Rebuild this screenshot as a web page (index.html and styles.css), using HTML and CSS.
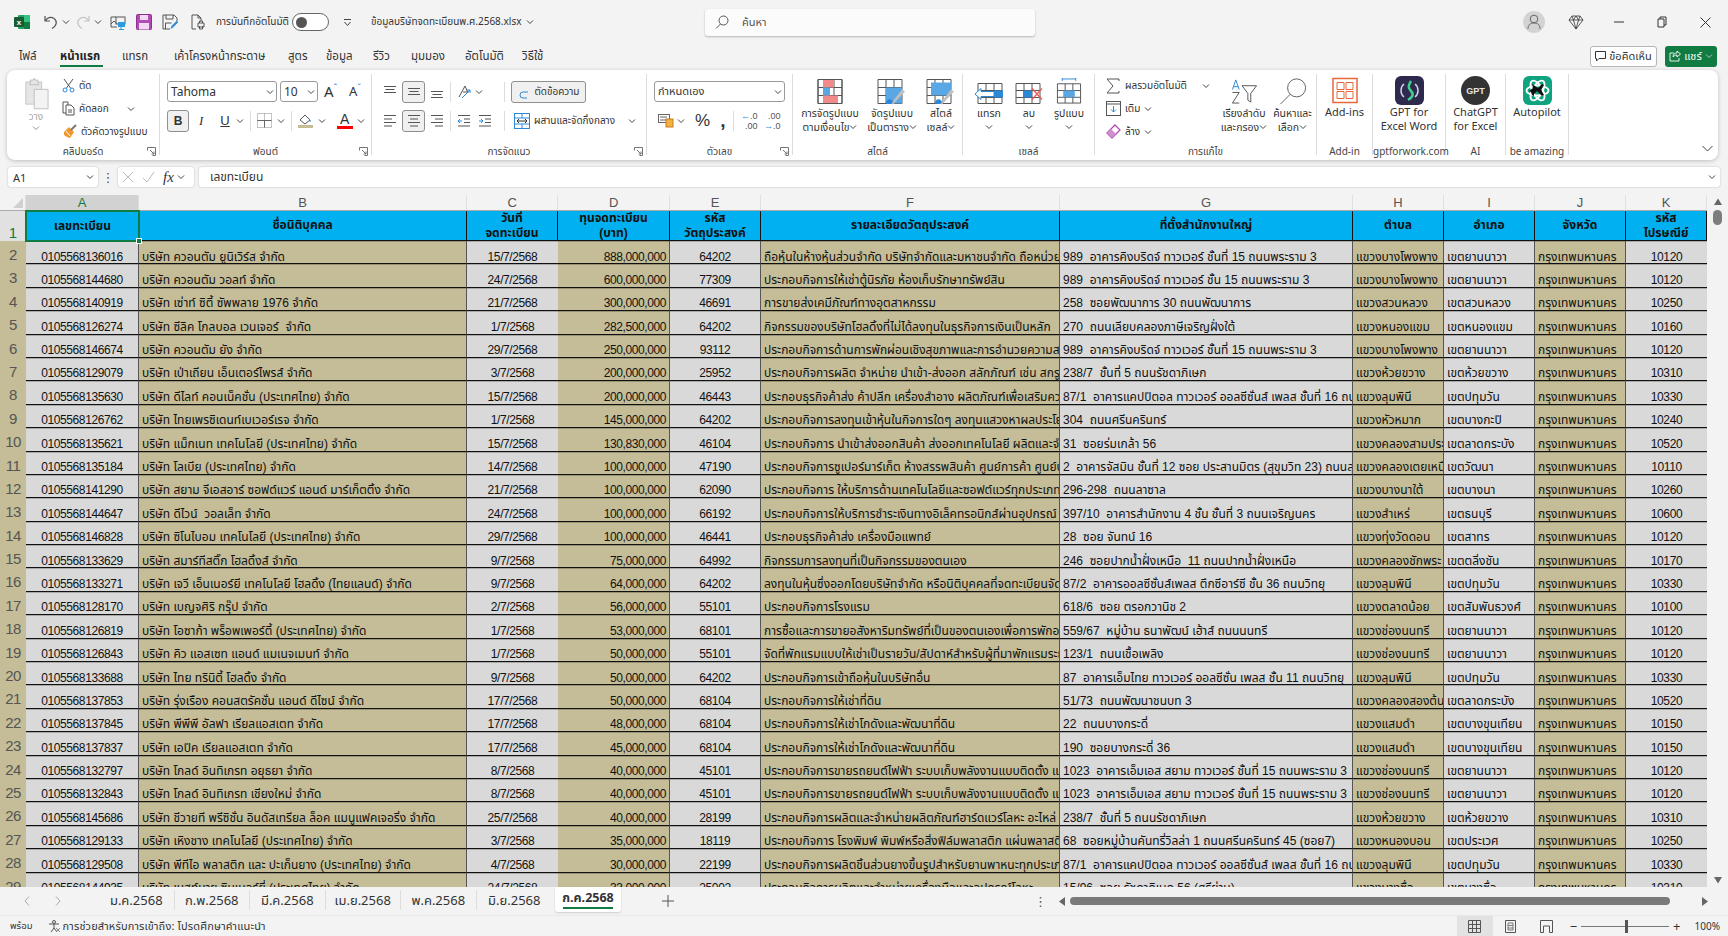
FILE: index.html
```html
<!DOCTYPE html>
<html lang="th">
<head>
    <meta charset="UTF-8">
    <title>ข้อมูลบริษัทจดทะเบียนพ.ศ.2568.xlsx - Excel</title>
    <link rel="stylesheet" href="styles.css">
</head>
<body>
    <svg class="defs" width="0" height="0">
        <symbol id="chev" viewBox="0 0 8 8"><path d="M1 2.5 4 5.5 7 2.5" fill="none" stroke="#444" stroke-width="1"/></symbol>
        <symbol id="launch" viewBox="0 0 9 9"><path d="M.5 3.5V.5H8.5V8.5H5.5M3 3 7 7M7 4.5V7H4.5" fill="none" stroke="#666" stroke-width=".9"/></symbol>
    </svg>

    <!-- title bar -->
    <header class="titlebar">
        <svg class="qat-logo" width="16" height="16" viewBox="0 0 16 16"><rect x="4" y="1" width="12" height="14" rx="1" fill="#21a366"/><rect x="10" y="1" width="6" height="7" fill="#33c481"/><rect x="10" y="8" width="6" height="7" fill="#107c41"/><rect y="3" width="10" height="10" rx="1" fill="#185c37"/><text x="5" y="11" class="logo-x">x</text></svg>
        <svg class="undo" width="14" height="16" viewBox="0 0 14 16"><path d="M1 2v5h5M1.5 7C3 3.5 7 2.5 10 4.5 13.5 7 13 11.5 8 14.5" fill="none" stroke="#555" stroke-width="1.2"/></svg>
        <svg class="chev chev-undo"><use href="#chev"/></svg>
        <svg class="redo" width="14" height="16" viewBox="0 0 14 16"><path d="M13 2v5H8M12.5 7C11 3.5 7 2.5 4 4.5 .5 7 1 11.5 6 14.5" fill="none" stroke="#c4c4c4" stroke-width="1.2"/></svg>
        <svg class="chev chev-redo"><use href="#chev"/></svg>
        <svg class="qat-screen" width="16" height="16" viewBox="0 0 16 16"><path d="M6 3H1v10h6M1 10l3-3 3 3" fill="none" stroke="#555"/><rect x="6" y="3" width="9" height="7" fill="none" stroke="#555"/><rect x="8" y="8" width="7" height="5" fill="#2b9be0"/><path d="M11 13v2M9 15.5h5" stroke="#2b9be0"/></svg>
        <svg class="qat-save" width="16" height="16" viewBox="0 0 16 16"><rect x=".5" y=".5" width="15" height="15" rx="1" fill="#b34bb5" stroke="#8f2f92"/><rect x="4" y="1" width="8" height="5" fill="#f2d9f3"/><rect x="3" y="9" width="10" height="6.5" fill="#f2d9f3"/></svg>
        <svg class="qat-saveas" width="16" height="16" viewBox="0 0 16 16"><path d="M1 1h11l3 3v4M1 1v14h7M4 1v4h7V1M3.5 15V9h6" fill="none" stroke="#555"/><path d="M8.5 15l1-3 5-5 1.5 1.5-5 5z" fill="#2b88d8"/></svg>
        <svg class="qat-print" width="14" height="16" viewBox="0 0 14 16"><path d="M1 1h6l3 3v3M1 1v14h4M7 1v3h3" fill="none" stroke="#555"/><path d="M7 9h6v4H7zM8.5 9V7h3v2M8.5 12v3h3v-3" fill="none" stroke="#555"/></svg>
        <span class="autosave-label">การบันทึกอัตโนมัติ</span>
        <span class="toggle"><i></i></span>
        <svg class="qat-more" width="9" height="9" viewBox="0 0 9 9"><path d="M1 1.5h7M1.5 4 4.5 7.5 7.5 4" fill="none" stroke="#444"/></svg>
        <span class="filename">ข้อมูลบริษัทจดทะเบียนพ.ศ.2568.xlsx</span>
        <svg class="chev chev-file"><use href="#chev"/></svg>
        <div class="search">
            <svg width="14" height="14" viewBox="0 0 14 14"><circle cx="8.5" cy="5.5" r="4.5" fill="none" stroke="#555"/><path d="M5.5 9 1 13.5" stroke="#555"/></svg>
            <span>ค้นหา</span>
        </div>
        <div class="window-tools">
            <span class="avatar"><svg width="14" height="16" viewBox="0 0 14 16"><circle cx="7" cy="5" r="3.8" fill="none" stroke="#666"/><path d="M1 15c0-4 2-6 6-6s6 2 6 6" fill="none" stroke="#666"/></svg></span>
            <svg class="diamond" width="16" height="15" viewBox="0 0 16 15"><path d="M4 1h8l3 4-7 9-7-9zM1 5h14M5.5 5 8 14l2.5-9M4 1l1.5 4L8 1l2.5 4L12 1" fill="none" stroke="#333" stroke-width=".8"/></svg>
            <svg class="win-min" width="10" height="10" viewBox="0 0 10 10"><path d="M0 5h10" stroke="#333"/></svg>
            <svg class="win-max" width="10" height="12" viewBox="0 0 10 12"><path d="M1 3h6v8H1zM3 3V1h6v8H7" fill="none" stroke="#333"/></svg>
            <svg class="win-close" width="11" height="11" viewBox="0 0 11 11"><path d="M.5.5l10 10M10.5.5l-10 10" stroke="#333"/></svg>
        </div>
    </header>

    <!-- menu tabs -->
    <nav class="tabs">
        <span class="tab-file">ไฟล์</span>
        <span class="tab-home">หน้าแรก</span>
        <span class="tab-insert">แทรก</span>
        <span class="tab-layout">เค้าโครงหน้ากระดาษ</span>
        <span class="tab-formula">สูตร</span>
        <span class="tab-data">ข้อมูล</span>
        <span class="tab-review">รีวิว</span>
        <span class="tab-view">มุมมอง</span>
        <span class="tab-auto">อัตโนมัติ</span>
        <span class="tab-help">วิธีใช้</span>
        <span class="tabs-right">
            <button class="btn-comment"><svg width="11" height="11" viewBox="0 0 11 11"><path d="M.5.5h10v7H4L1.5 10V7.5h-1z" fill="none" stroke="#333"/></svg>ข้อคิดเห็น</button>
            <button class="btn-share"><svg width="12" height="12" viewBox="0 0 12 12"><path d="M5 3H1v8h9V8M4 7c0-3 2-4 4-4V1l3.5 3L8 7V5C6 5 5 6 4 7z" fill="none" stroke="#fff" stroke-width=".9"/></svg>แชร์<svg class="chev"><use href="#chev"/></svg></button>
        </span>
    </nav>

    <!-- ribbon -->
    <section class="ribbon">
        <div class="group g-clip">
            <div class="group-body">
                <div class="paste">
                    <svg width="25" height="33" viewBox="0 0 27 35"><path d="M2 5h17v24H2z" fill="#e6e6e6" stroke="#c4c4c4"/><path d="M7 5V3h3l1-2 1 2h3v2l1 3H6z" fill="#e6e6e6" stroke="#bdbdbd"/><path d="M11 13h15v21H11z" fill="#f3f3f3" stroke="#bdbdbd"/></svg>
                    <span>วาง</span>
                    <svg class="chev"><use href="#chev"/></svg>
                </div>
                <div class="stack">
                    <div class="item"><svg width="13" height="15" viewBox="0 0 13 15"><path d="M2 1l6.5 9M11 1 4.5 10" stroke="#555" fill="none"/><circle cx="3" cy="12" r="2" fill="none" stroke="#2b88d8"/><circle cx="10" cy="12" r="2" fill="none" stroke="#2b88d8"/></svg>ตัด</div>
                    <div class="item"><svg width="13" height="15" viewBox="0 0 13 15"><path d="M1 1h5v11H1z" fill="none" stroke="#555"/><path d="M4 4h5l3 3v7H4z" fill="#fff" stroke="#555"/><path d="M6 9h4M6 11h4" stroke="#555"/></svg>คัดลอก<svg class="chev chev-copy"><use href="#chev"/></svg></div>
                    <div class="item"><svg width="15" height="15" viewBox="0 0 15 15"><path d="M2 8l5-5 5 5-4 6-3-1-3-2z" fill="#f0962e"/><path d="M9 6l5-5" stroke="#777" stroke-width="2"/><path d="M4 7l4 5" stroke="#fff"/></svg>ตัวคัดวางรูปแบบ</div>
                </div>
            </div>
            <div class="group-label">คลิปบอร์ด<svg class="launcher"><use href="#launch"/></svg></div>
        </div>

        <div class="group g-font">
            <div class="group-body rows">
                <div class="row-ctl">
                    <div class="select sel-font">Tahoma<svg class="chev"><use href="#chev"/></svg></div>
                    <div class="select sel-size">10<svg class="chev"><use href="#chev"/></svg></div>
                    <span class="grow-a">A<sup>ˆ</sup></span>
                    <span class="shrink-a">A<sup>ˇ</sup></span>
                </div>
                <div class="row-ctl">
                    <span class="toggle-btn b-bold">B</span>
                    <span class="b-italic">I</span>
                    <span class="b-under">U</span>
                    <svg class="chev"><use href="#chev"/></svg>
                    <i class="vsep sep-u"></i>
                    <svg class="b-border" width="15" height="15" viewBox="0 0 15 15"><path d="M.5.5h14v14H.5zM7.5.5v14M.5 7.5h14" fill="none" stroke="#888" stroke-dasharray="1 1"/><path d="M.5 7.5h14M7.5 7.5v7" stroke="#666"/></svg>
                    <svg class="chev"><use href="#chev"/></svg>
                    <i class="vsep sep-b"></i>
                    <svg class="b-fill" width="15" height="16" viewBox="0 0 15 16"><path d="M2 7l5-5 5 5-5 4z" fill="none" stroke="#555"/><path d="M10 4l3 4-1 1z" fill="#2b88d8"/><rect y="12" width="15" height="3" fill="#c4bd97"/></svg>
                    <svg class="chev"><use href="#chev"/></svg>
                    <span class="b-color">A<i></i></span>
                    <svg class="chev"><use href="#chev"/></svg>
                </div>
            </div>
            <div class="group-label">ฟอนต์<svg class="launcher"><use href="#launch"/></svg></div>
        </div>

        <div class="group g-align">
            <div class="group-body rows">
                <div class="row-ctl">
                    <svg class="al al-1" width="14" height="14" viewBox="0 0 14 14"><path d="M1 1.5h12M2.5 4.5h9M1 7.5h12" stroke="#555"/></svg>
                    <span class="toggle-btn al-on"><svg width="14" height="14" viewBox="0 0 14 14"><path d="M1 3.5h12M2.5 6.5h9M1 9.5h12" stroke="#555"/></svg></span>
                    <svg class="al al-3" width="14" height="14" viewBox="0 0 14 14"><path d="M1 6.5h12M2.5 9.5h9M1 12.5h12" stroke="#555"/></svg>
                    <i class="vsep sep-al"></i>
                    <svg class="al-orient" width="15" height="15" viewBox="0 0 15 15"><path d="M2 13 8 2l3 7" fill="none" stroke="#555"/><path d="M6 8h4" stroke="#555"/><path d="M5 14 13 6M13 6h-3M13 6v3" stroke="#2b88d8" fill="none"/></svg>
                    <svg class="chev"><use href="#chev"/></svg>
                    <i class="vsep sep-wrap"></i>
                    <div class="toggle-btn wrap-btn"><svg width="14" height="16" viewBox="0 0 14 16"><path d="M9 14H5a3 3 0 0 1 0-6h5" fill="none" stroke="#2b88d8"/></svg>ตัดข้อความ</div>
                </div>
                <div class="row-ctl">
                    <svg class="al al-1" width="14" height="14" viewBox="0 0 14 14"><path d="M1 1.5h12M1 5h8M1 8.5h12M1 12h8" stroke="#555"/></svg>
                    <span class="toggle-btn al-on"><svg width="14" height="14" viewBox="0 0 14 14"><path d="M1 1.5h12M3 5h8M1 8.5h12M3 12h8" stroke="#555"/></svg></span>
                    <svg class="al al-3" width="14" height="14" viewBox="0 0 14 14"><path d="M1 1.5h12M5 5h8M1 8.5h12M5 12h8" stroke="#555"/></svg>
                    <i class="vsep sep-al"></i>
                    <svg class="al-indent" width="14" height="14" viewBox="0 0 14 14"><path d="M1 1.5h12M7 5h6M7 8.5h6M1 12h12" stroke="#555"/><path d="M1 7h4M1 7l2-2M1 7l2 2" stroke="#2b88d8" fill="none"/></svg>
                    <svg class="al-indent2" width="14" height="14" viewBox="0 0 14 14"><path d="M1 1.5h12M7 5h6M7 8.5h6M1 12h12" stroke="#555"/><path d="M1 7h4M5 7 3 5M5 7 3 9" stroke="#2b88d8" fill="none"/></svg>
                    <i class="vsep sep-wrap2"></i>
                    <svg class="al-merge" width="16" height="16" viewBox="0 0 16 16"><rect x=".5" y=".5" width="15" height="15" fill="none" stroke="#2b88d8"/><path d="M.5 5h15M.5 11h15M8 .5V5M8 11v4.5" stroke="#2b88d8"/><path d="M3 8h10M3 8l2-2M3 8l2 2M13 8l-2-2M13 8l-2 2" stroke="#333" fill="none"/></svg>
                    <span class="merge-text">ผสานและจัดกึ่งกลาง</span>
                    <svg class="chev chev-merge"><use href="#chev"/></svg>
                </div>
            </div>
            <div class="group-label">การจัดแนว<svg class="launcher"><use href="#launch"/></svg></div>
        </div>

        <div class="group g-num">
            <div class="group-body rows">
                <div class="row-ctl">
                    <div class="select sel-num">กำหนดเอง<svg class="chev"><use href="#chev"/></svg></div>
                </div>
                <div class="row-ctl">
                    <svg class="n-acc" width="16" height="15" viewBox="0 0 16 15"><rect x=".5" y="1.5" width="11" height="8" fill="none" stroke="#666"/><path d="M2 4h7M2 7h7" stroke="#666"/><rect x="8" y="6" width="7" height="8" fill="#f5b041" stroke="#c77f1e"/></svg>
                    <svg class="chev"><use href="#chev"/></svg>
                    <span class="n-pct">%</span>
                    <span class="n-comma">,</span>
                    <i class="vsep sep-n"></i>
                    <span class="n-dec"><b><em>←</em>.0</b><b>.00</b></span>
                    <span class="n-dec n-dec2"><b>.00</b><b><em>→</em>.0</b></span>
                </div>
            </div>
            <div class="group-label">ตัวเลข<svg class="launcher"><use href="#launch"/></svg></div>
        </div>

        <div class="group g-style">
            <div class="group-body big-row">
                <div class="big b-cond">
                    <svg width="26" height="26" viewBox="0 0 26 26"><path d="M1 1h24v24H1zM9 1v24M17 1v24M1 9h24M1 17h24" fill="none" stroke="#555"/><rect x="6" y="1" width="11" height="8" fill="#f28a8a"/><rect x="6" y="9" width="7" height="8" fill="#5aa7e6"/><rect x="6" y="17" width="15" height="8" fill="#f28a8a"/><path d="M1 1h24v24H1z" fill="none" stroke="#555"/></svg>
                    <span>การจัดรูปแบบ</span>
                    <span>ตามเงื่อนไข<svg class="chev"><use href="#chev"/></svg></span>
                </div>
                <div class="big b-table">
                    <svg width="30" height="26" viewBox="0 0 30 26"><path d="M1 1h24v24H1zM9 1v24M17 1v24M1 9h24M1 17h24" fill="none" stroke="#555"/><rect x="9" y="9" width="16" height="16" fill="#5aa7e6"/><path d="M14 25 25 11l3 2-12 13z" fill="#bfbfbf"/><path d="M9 25c0-3 2-5 5-4l2 2c-1 3-3 3-7 2z" fill="#2b88d8"/></svg>
                    <span>จัดรูปแบบ</span>
                    <span>เป็นตาราง<svg class="chev"><use href="#chev"/></svg></span>
                </div>
                <div class="big b-cell">
                    <svg width="30" height="26" viewBox="0 0 30 26"><path d="M1 1h24v24H1zM9 1v24M17 1v24M1 9h24M1 17h24" fill="none" stroke="#555"/><rect x="5" y="4" width="20" height="13" fill="#5aa7e6"/><path d="M14 25 25 11l3 2-12 13z" fill="#bfbfbf"/><path d="M9 25c0-3 2-5 5-4l2 2c-1 3-3 3-7 2z" fill="#2b88d8"/></svg>
                    <span>สไตล์</span>
                    <span>เซลล์<svg class="chev"><use href="#chev"/></svg></span>
                </div>
            </div>
            <div class="group-label">สไตล์</div>
        </div>

        <div class="group g-cells">
            <div class="group-body big-row">
                <div class="big b-ins">
                    <svg width="30" height="26" viewBox="0 0 30 26"><path d="M4 5h24v20H4zM12 5v20M20 5v20M4 12h24M4 19h24" fill="none" stroke="#555"/><rect x="20" y="12" width="9" height="7" fill="#2b88d8"/><path d="M1 15.5 7 10v3h13v5H7v3z" fill="#fff" stroke="#2b88d8"/></svg>
                    <span>แทรก</span>
                    <svg class="chev"><use href="#chev"/></svg>
                </div>
                <div class="big b-del">
                    <svg width="30" height="26" viewBox="0 0 30 26"><path d="M2 5h24v20H2zM10 5v20M18 5v20M2 12h24M2 19h24" fill="none" stroke="#555"/><rect x="9" y="12" width="9" height="7" fill="#2b88d8"/><path d="M18 10 28 21M28 10 18 21" stroke="#ee5a5a" stroke-width="1.4"/></svg>
                    <span>ลบ</span>
                    <svg class="chev"><use href="#chev"/></svg>
                </div>
                <div class="big b-fmt">
                    <svg width="26" height="28" viewBox="0 0 26 28"><path d="M6 1h14M6 0v3M20 0v3" stroke="#2b88d8"/><path d="M1 6h24v20H1zM9 6v20M17 6v20M1 13h24M1 20h24" fill="none" stroke="#555"/><rect x="7" y="13" width="12" height="7" fill="#5aa7e6"/></svg>
                    <span>รูปแบบ</span>
                    <svg class="chev"><use href="#chev"/></svg>
                </div>
            </div>
            <div class="group-label">เซลล์</div>
        </div>

        <div class="group g-edit">
            <div class="group-body">
                <div class="stack stack-edit">
                    <div class="item"><svg width="15" height="16" viewBox="0 0 15 16"><path d="M13 3V1H1l6 7-6 7h12v-2" fill="none" stroke="#555"/></svg>ผลรวมอัตโนมัติ<svg class="chev chev-sum"><use href="#chev"/></svg></div>
                    <div class="item"><svg width="15" height="15" viewBox="0 0 15 15"><rect x=".5" y=".5" width="14" height="14" fill="none" stroke="#555"/><path d="M.5 3h14" stroke="#555"/><path d="M7.5 5v6M5 8.5 7.5 11 10 8.5" stroke="#2b88d8" fill="none"/></svg>เติม<svg class="chev"><use href="#chev"/></svg></div>
                    <div class="item"><svg width="15" height="15" viewBox="0 0 15 15"><path d="M1 9 9 1l5 5-8 8z" fill="none" stroke="#b34bb5" stroke-width="1.3"/><path d="M1 9l4-4 5 5-4 4z" fill="#cf8fd1"/></svg>ล้าง<svg class="chev"><use href="#chev"/></svg></div>
                </div>
                <div class="big b-sort">
                    <svg width="28" height="28" viewBox="0 0 28 28"><path d="M2 12 5.5 2 9 12M3 9h5" fill="none" stroke="#2b88d8"/><path d="M2 15h7l-7 11h7" fill="none" stroke="#555"/><path d="M12 8h15l-6 8v9l-3-2v-7z" fill="none" stroke="#555"/></svg>
                    <span>เรียงลำดับ</span>
                    <span>และกรอง<svg class="chev"><use href="#chev"/></svg></span>
                </div>
                <div class="big b-find">
                    <svg width="30" height="30" viewBox="0 0 30 30"><circle cx="19" cy="11" r="10" fill="#fff" stroke="#555"/><path d="M12 18 1 29" stroke="#555"/></svg>
                    <span>ค้นหาและ</span>
                    <span>เลือก<svg class="chev"><use href="#chev"/></svg></span>
                </div>
            </div>
            <div class="group-label">การแก้ไข</div>
        </div>

        <div class="group g-addins">
            <div class="group-body big-row">
                <div class="big b-plain">
                    <svg width="26" height="26" viewBox="0 0 26 26"><rect x="1" y="1" width="24" height="24" fill="none" stroke="#e8663a" stroke-width="1.5"/><path d="M5 5h7v7H5zM14 5h7v7h-7zM5 14h7v7H5zM14 14h7v7h-7z" fill="none" stroke="#e8663a"/></svg>
                    <span>Add-ins</span>
                </div>
            </div>
            <div class="group-label">Add-in</div>
        </div>
        <div class="group g-gpt">
            <div class="group-body big-row">
                <div class="big b-plain">
                    <svg width="29" height="29" viewBox="0 0 29 29"><rect width="29" height="29" rx="6" fill="#2d2a4e"/><path d="M9 8C5 11 5 18 9 21M20 8c4 3 4 10 0 13" fill="none" stroke="#cfd3e6" stroke-width="1.5"/><path d="M16 5c-3 5-3 7 0 10s2 6-3 9" fill="none" stroke="#3fce8c" stroke-width="2.5"/></svg>
                    <span>GPT for</span>
                    <span>Excel Word</span>
                </div>
            </div>
            <div class="group-label">gptforwork.com</div>
        </div>
        <div class="group g-ai">
            <div class="group-body big-row">
                <div class="big b-plain">
                    <svg width="29" height="29" viewBox="0 0 29 29"><circle cx="14.5" cy="14.5" r="14.5" fill="#333"/><text x="14.5" y="18" class="logo-gpt">GPT</text></svg>
                    <span>ChatGPT</span>
                    <span>for Excel</span>
                </div>
            </div>
            <div class="group-label">AI</div>
        </div>
        <div class="group g-auto">
            <div class="group-body big-row">
                <div class="big b-plain">
                    <svg width="29" height="29" viewBox="0 0 29 29"><rect width="29" height="29" rx="6" fill="#10a37f"/><g fill="none" stroke="#fff" stroke-width="1.8"><ellipse cx="14.5" cy="14.5" rx="11" ry="5"/><ellipse cx="14.5" cy="14.5" rx="11" ry="5" transform="rotate(60 14.5 14.5)"/><ellipse cx="14.5" cy="14.5" rx="11" ry="5" transform="rotate(120 14.5 14.5)"/></g><path d="M9 8l6 4 4-4 2 1-3 5 3 5-2 1-5-5-3 3v2l-2-1-1-3-2-1 4-3z" fill="#111"/></svg>
                    <span>Autopilot</span>
                </div>
            </div>
            <div class="group-label">be amazing</div>
        </div>
        <svg class="ribbon-collapse" width="11" height="7" viewBox="0 0 11 7"><path d="M.5 1 5.5 6 10.5 1" fill="none" stroke="#444"/></svg>
    </section>

    <!-- formula bar -->
    <div class="formula-bar">
        <div class="name-box">A1<svg class="chev"><use href="#chev"/></svg></div>
        <span class="fx-dots">⋮</span>
        <div class="fx-btns">
            <svg width="12" height="12" viewBox="0 0 12 12"><path d="M1 1l10 10M11 1 1 11" stroke="#bbb"/></svg>
            <svg width="13" height="12" viewBox="0 0 13 12"><path d="M1 7l4 4 7-10" fill="none" stroke="#bbb"/></svg>
            <span class="fx">fx</span>
            <svg class="chev"><use href="#chev"/></svg>
        </div>
        <div class="fx-input">เลขทะเบียน<svg class="chev"><use href="#chev"/></svg></div>
    </div>

    <!-- sheet -->
    <main class="sheet-wrap">
        <div class="sheet">
            <div class="row col-heads">
                <div class="corner"></div><div class="col-on">A</div><div>B</div><div>C</div><div>D</div><div>E</div><div>F</div><div>G</div><div>H</div><div>I</div><div>J</div><div>K</div>
            </div>
            <div class="row head-row">
                <div class="rh rh-on">1</div>
                <div class="selected">เลขทะเบียน<i class="handle"></i></div><div>ชื่อนิติบุคคล</div><div>วันที่<br>จดทะเบียน</div><div>ทุนจดทะเบียน<br>(บาท)</div><div>รหัส<br>วัตถุประสงค์</div><div>รายละเอียดวัตถุประสงค์</div><div>ที่ตั้งสำนักงานใหญ่</div><div>ตำบล</div><div>อำเภอ</div><div>จังหวัด</div><div>รหัส<br>ไปรษณีย์</div>
            </div>
            <div class="row"><div class="rh">2</div><div>0105568136016</div><div>บริษัท ควอนตัม ยูนิเวิร์ส จำกัด</div><div>15/7/2568</div><div>888,000,000</div><div>64202</div><div>ถือหุ้นในห้างหุ้นส่วนจำกัด บริษัทจำกัดและมหาชนจำกัด ถือหน่วยลงทุน</div><div>989  อาคารคิงบริดจ์ ทาวเวอร์ ชั้นที่ 15 ถนนพระราม 3</div><div>แขวงบางโพงพาง</div><div>เขตยานนาวา</div><div>กรุงเทพมหานคร</div><div>10120</div></div>
            <div class="row"><div class="rh">3</div><div>0105568144680</div><div>บริษัท ควอนตัม วอลท์ จำกัด</div><div>24/7/2568</div><div>600,000,000</div><div>77309</div><div>ประกอบกิจการให้เช่าตู้นิรภัย ห้องเก็บรักษาทรัพย์สิน</div><div>989  อาคารคิงบริดจ์ ทาวเวอร์ ชั้น 15 ถนนพระราม 3</div><div>แขวงบางโพงพาง</div><div>เขตยานนาวา</div><div>กรุงเทพมหานคร</div><div>10120</div></div>
            <div class="row"><div class="rh">4</div><div>0105568140919</div><div>บริษัท เซ่าท์ ซิตี้ ซัพพลาย 1976 จำกัด</div><div>21/7/2568</div><div>300,000,000</div><div>46691</div><div>การขายส่งเคมีภัณฑ์ทางอุตสาหกรรม</div><div>258  ซอยพัฒนาการ 30 ถนนพัฒนาการ</div><div>แขวงสวนหลวง</div><div>เขตสวนหลวง</div><div>กรุงเทพมหานคร</div><div>10250</div></div>
            <div class="row"><div class="rh">5</div><div>0105568126274</div><div>บริษัท ซีลิค โกลบอล เวนเจอร์  จำกัด</div><div>1/7/2568</div><div>282,500,000</div><div>64202</div><div>กิจกรรมของบริษัทโฮลดิ้งที่ไม่ได้ลงทุนในธุรกิจการเงินเป็นหลัก</div><div>270  ถนนเลียบคลองภาษีเจริญฝั่งใต้</div><div>แขวงหนองแขม</div><div>เขตหนองแขม</div><div>กรุงเทพมหานคร</div><div>10160</div></div>
            <div class="row"><div class="rh">6</div><div>0105568146674</div><div>บริษัท ควอนตัม ยัง จำกัด</div><div>29/7/2568</div><div>250,000,000</div><div>93112</div><div>ประกอบกิจการด้านการพักผ่อนเชิงสุขภาพและการอำนวยความสะดวก</div><div>989  อาคารคิงบริดจ์ ทาวเวอร์ ชั้นที่ 15 ถนนพระราม 3</div><div>แขวงบางโพงพาง</div><div>เขตยานนาวา</div><div>กรุงเทพมหานคร</div><div>10120</div></div>
            <div class="row"><div class="rh">7</div><div>0105568129079</div><div>บริษัท เป่าเถียน เอ็นเตอร์ไพรส์ จำกัด</div><div>3/7/2568</div><div>200,000,000</div><div>25952</div><div>ประกอบกิจการผลิต จำหน่าย นำเข้า-ส่งออก สลักภัณฑ์ เช่น สกรู</div><div>238/7  ชั้นที่ 5 ถนนรัชดาภิเษก</div><div>แขวงห้วยขวาง</div><div>เขตห้วยขวาง</div><div>กรุงเทพมหานคร</div><div>10310</div></div>
            <div class="row"><div class="rh">8</div><div>0105568135630</div><div>บริษัท ดีไลท์ คอนเน็คชั่น (ประเทศไทย) จำกัด</div><div>15/7/2568</div><div>200,000,000</div><div>46443</div><div>ประกอบธุรกิจค้าส่ง ค้าปลีก เครื่องสำอาง ผลิตภัณฑ์เพื่อเสริมความงาม</div><div>87/1  อาคารแคปปิตอล ทาวเวอร์ ออลซีซั่นส์ เพลส ชั้นที่ 16 ถนนวิทยุ</div><div>แขวงลุมพินี</div><div>เขตปทุมวัน</div><div>กรุงเทพมหานคร</div><div>10330</div></div>
            <div class="row"><div class="rh">9</div><div>0105568126762</div><div>บริษัท ไทยเพรซิเดนท์เบเวอร์เรจ จำกัด</div><div>1/7/2568</div><div>145,000,000</div><div>64202</div><div>ประกอบกิจการลงทุนเข้าหุ้นในกิจการใดๆ ลงทุนแสวงหาผลประโยชน์</div><div>304  ถนนศรีนครินทร์</div><div>แขวงหัวหมาก</div><div>เขตบางกะปิ</div><div>กรุงเทพมหานคร</div><div>10240</div></div>
            <div class="row"><div class="rh">10</div><div>0105568135621</div><div>บริษัท แม็กเนท เทคโนโลยี (ประเทศไทย) จำกัด</div><div>15/7/2568</div><div>130,830,000</div><div>46104</div><div>ประกอบกิจการ นำเข้าส่งออกสินค้า ส่งออกเทคโนโลยี ผลิตและจำหน่าย</div><div>31  ซอยร่มเกล้า 56</div><div>แขวงคลองสามประเวศ</div><div>เขตลาดกระบัง</div><div>กรุงเทพมหานคร</div><div>10520</div></div>
            <div class="row"><div class="rh">11</div><div>0105568135184</div><div>บริษัท โลเบีย (ประเทศไทย) จำกัด</div><div>14/7/2568</div><div>100,000,000</div><div>47190</div><div>ประกอบกิจการซูเปอร์มาร์เก็ต ห้างสรรพสินค้า ศูนย์การค้า ศูนย์บริการ</div><div>2  อาคารจัสมิน ชั้นที่ 12 ซอย ประสานมิตร (สุขุมวิท 23) ถนนสุขุมวิท</div><div>แขวงคลองเตยเหนือ</div><div>เขตวัฒนา</div><div>กรุงเทพมหานคร</div><div>10110</div></div>
            <div class="row"><div class="rh">12</div><div>0105568141290</div><div>บริษัท สยาม จีเอสอาร์ ซอฟต์แวร์ แอนด์ มาร์เก็ตติ้ง จำกัด</div><div>21/7/2568</div><div>100,000,000</div><div>62090</div><div>ประกอบกิจการ ให้บริการด้านเทคโนโลยีและซอฟต์แวร์ทุกประเภท</div><div>296-298  ถนนลาซาล</div><div>แขวงบางนาใต้</div><div>เขตบางนา</div><div>กรุงเทพมหานคร</div><div>10260</div></div>
            <div class="row"><div class="rh">13</div><div>0105568144647</div><div>บริษัท ดีไวน์  วอลเล็ท จำกัด</div><div>24/7/2568</div><div>100,000,000</div><div>66192</div><div>ประกอบกิจการให้บริการชำระเงินทางอิเล็คทรอนิกส์ผ่านอุปกรณ์</div><div>397/10  อาคารสำนักงาน 4 ชั้น ชั้นที่ 3 ถนนเจริญนคร</div><div>แขวงสำเหร่</div><div>เขตธนบุรี</div><div>กรุงเทพมหานคร</div><div>10600</div></div>
            <div class="row"><div class="rh">14</div><div>0105568146828</div><div>บริษัท ซิโนไบอม เทคโนโลยี (ประเทศไทย) จำกัด</div><div>29/7/2568</div><div>100,000,000</div><div>46441</div><div>ประกอบธุรกิจค้าส่ง เครื่องมือแพทย์</div><div>28  ซอย จันทน์ 16</div><div>แขวงทุ่งวัดดอน</div><div>เขตสาทร</div><div>กรุงเทพมหานคร</div><div>10120</div></div>
            <div class="row"><div class="rh">15</div><div>0105568133629</div><div>บริษัท สมาร์ทีสติ๊ก โฮลดิ้งส์ จำกัด</div><div>9/7/2568</div><div>75,000,000</div><div>64992</div><div>กิจกรรมการลงทุนที่เป็นกิจกรรมของตนเอง</div><div>246  ซอยปากน้ำฝั่งเหนือ  11 ถนนปากน้ำฝั่งเหนือ</div><div>แขวงคลองชักพระ</div><div>เขตตลิ่งชัน</div><div>กรุงเทพมหานคร</div><div>10170</div></div>
            <div class="row"><div class="rh">16</div><div>0105568133271</div><div>บริษัท เจวี เอ็นเนอร์ยี เทคโนโลยี โฮลดิ้ง (ไทยแลนด์) จำกัด</div><div>9/7/2568</div><div>64,000,000</div><div>64202</div><div>ลงทุนในหุ้นซึ่งออกโดยบริษัทจำกัด หรือนิติบุคคลที่จดทะเบียนจัดตั้ง</div><div>87/2  อาคารออลซีซั่นส์เพลส ตึกซีอาร์ซี ชั้น 36 ถนนวิทยุ</div><div>แขวงลุมพินี</div><div>เขตปทุมวัน</div><div>กรุงเทพมหานคร</div><div>10330</div></div>
            <div class="row"><div class="rh">17</div><div>0105568128170</div><div>บริษัท เบญจศิริ กรุ๊ป จำกัด</div><div>2/7/2568</div><div>56,000,000</div><div>55101</div><div>ประกอบกิจการโรงแรม</div><div>618/6  ซอย ตรอกวานิช 2</div><div>แขวงตลาดน้อย</div><div>เขตสัมพันธวงศ์</div><div>กรุงเทพมหานคร</div><div>10100</div></div>
            <div class="row"><div class="rh">18</div><div>0105568126819</div><div>บริษัท โอซาก้า พร็อพเพอร์ตี้ (ประเทศไทย) จำกัด</div><div>1/7/2568</div><div>53,000,000</div><div>68101</div><div>การซื้อและการขายอสังหาริมทรัพย์ที่เป็นของตนเองเพื่อการพักอาศัย</div><div>559/67  หมู่บ้าน ธนาพัฒน์ เฮ้าส์ ถนนนนทรี</div><div>แขวงช่องนนทรี</div><div>เขตยานนาวา</div><div>กรุงเทพมหานคร</div><div>10120</div></div>
            <div class="row"><div class="rh">19</div><div>0105568126843</div><div>บริษัท คิว แอสเซท แอนด์ แมเนจเมนท์ จำกัด</div><div>1/7/2568</div><div>50,000,000</div><div>55101</div><div>จัดที่พักแรมแบบให้เช่าเป็นรายวัน/สัปดาห์สำหรับผู้ที่มาพักแรมระยะสั้น</div><div>123/1  ถนนเชื้อเพลิง</div><div>แขวงช่องนนทรี</div><div>เขตยานนาวา</div><div>กรุงเทพมหานคร</div><div>10120</div></div>
            <div class="row"><div class="rh">20</div><div>0105568133688</div><div>บริษัท ไทย ทรินิตี้ โฮลดิ้ง จำกัด</div><div>9/7/2568</div><div>50,000,000</div><div>64202</div><div>ประกอบกิจการเข้าถือหุ้นในบริษัทอื่น</div><div>87  อาคารเอ็มไทย ทาวเวอร์ ออลซีซั่น เพลส ชั้น 11 ถนนวิทยุ</div><div>แขวงลุมพินี</div><div>เขตปทุมวัน</div><div>กรุงเทพมหานคร</div><div>10330</div></div>
            <div class="row"><div class="rh">21</div><div>0105568137853</div><div>บริษัท รุ่งเรือง คอนสตรัคชั่น แอนด์ ดีไซน์ จำกัด</div><div>17/7/2568</div><div>50,000,000</div><div>68104</div><div>ประกอบกิจการให้เช่าที่ดิน</div><div>51/73  ถนนพัฒนาชนบท 3</div><div>แขวงคลองสองต้นนุ่น</div><div>เขตลาดกระบัง</div><div>กรุงเทพมหานคร</div><div>10520</div></div>
            <div class="row"><div class="rh">22</div><div>0105568137845</div><div>บริษัท พีพีพี อัลฟา เรียลแอสเตท จำกัด</div><div>17/7/2568</div><div>48,000,000</div><div>68104</div><div>ประกอบกิจการให้เช่าโกดังและพัฒนาที่ดิน</div><div>22  ถนนบางกระดี่</div><div>แขวงแสมดำ</div><div>เขตบางขุนเทียน</div><div>กรุงเทพมหานคร</div><div>10150</div></div>
            <div class="row"><div class="rh">23</div><div>0105568137837</div><div>บริษัท เอปิค เรียลแอสเตท จำกัด</div><div>17/7/2568</div><div>45,000,000</div><div>68104</div><div>ประกอบกิจการให้เช่าโกดังและพัฒนาที่ดิน</div><div>190  ซอยบางกระดี่ 36</div><div>แขวงแสมดำ</div><div>เขตบางขุนเทียน</div><div>กรุงเทพมหานคร</div><div>10150</div></div>
            <div class="row"><div class="rh">24</div><div>0105568132797</div><div>บริษัท โกลด์ อินทิเกรท อยุธยา จำกัด</div><div>8/7/2568</div><div>40,000,000</div><div>45101</div><div>ประกอบกิจการขายรถยนต์ไฟฟ้า ระบบเก็บพลังงานแบบติดตั้ง และ</div><div>1023  อาคารเอ็มเอส สยาม ทาวเวอร์ ชั้นที่ 15 ถนนพระราม 3</div><div>แขวงช่องนนทรี</div><div>เขตยานนาวา</div><div>กรุงเทพมหานคร</div><div>10120</div></div>
            <div class="row"><div class="rh">25</div><div>0105568132843</div><div>บริษัท โกลด์ อินทิเกรท เชียงใหม่ จำกัด</div><div>8/7/2568</div><div>40,000,000</div><div>45101</div><div>ประกอบกิจการขายรถยนต์ไฟฟ้า ระบบเก็บพลังงานแบบติดตั้ง และ</div><div>1023  อาคารเอ็มเอส สยาม ทาวเวอร์ ชั้นที่ 15 ถนนพระราม 3</div><div>แขวงช่องนนทรี</div><div>เขตยานนาวา</div><div>กรุงเทพมหานคร</div><div>10120</div></div>
            <div class="row"><div class="rh">26</div><div>0105568145686</div><div>บริษัท ชีวายที พรีซิชั่น อินดัสเทรียล ล็อค แมนูแฟคเจอริ่ง จำกัด</div><div>25/7/2568</div><div>40,000,000</div><div>28199</div><div>ประกอบกิจการผลิตและจำหน่ายผลิตภัณฑ์ฮาร์ดแวร์โลหะ อะไหล่</div><div>238/7  ชั้นที่ 5 ถนนรัชดาภิเษก</div><div>แขวงห้วยขวาง</div><div>เขตห้วยขวาง</div><div>กรุงเทพมหานคร</div><div>10310</div></div>
            <div class="row"><div class="rh">27</div><div>0105568129133</div><div>บริษัท เหิงชาง เทคโนโลยี (ประเทศไทย) จำกัด</div><div>3/7/2568</div><div>35,000,000</div><div>18119</div><div>ประกอบกิจการ โรงพิมพ์ พิมพ์หรือสิ่งฟิล์มพลาสติก แผ่นพลาสติก</div><div>68  ซอยหมู่บ้านคันทรี่วิลล่า 1 ถนนศรีนครินทร์ 45 (ซอย7)</div><div>แขวงหนองบอน</div><div>เขตประเวศ</div><div>กรุงเทพมหานคร</div><div>10250</div></div>
            <div class="row"><div class="rh">28</div><div>0105568129508</div><div>บริษัท พีทีไอ พลาสติก และ ปะเก็นยาง (ประเทศไทย) จำกัด</div><div>4/7/2568</div><div>30,000,000</div><div>22199</div><div>ประกอบกิจการผลิตชิ้นส่วนยางขึ้นรูปสำหรับยานพาหนะทุกประเภท</div><div>87/1  อาคารแคปปิตอล ทาวเวอร์ ออลซีซั่นส์ เพลส ชั้นที่ 16 ถนนวิทยุ</div><div>แขวงลุมพินี</div><div>เขตปทุมวัน</div><div>กรุงเทพมหานคร</div><div>10330</div></div>
            <div class="row"><div class="rh">29</div><div>0105568144935</div><div>บริษัท เบสท์บาย ซินเนอร์ยี่ (ประเทศไทย) จำกัด</div><div>24/7/2568</div><div>33,000,000</div><div>25002</div><div>ประกอบกิจการผลิตและจำหน่ายเครื่องมือและอุปกรณ์โลหะ</div><div>15/96  ซอย รัชดาภิเษก 56 (ศรีย่าน)</div><div>แขวงบางซื่อ</div><div>เขตบางซื่อ</div><div>กรุงเทพมหานคร</div><div>10310</div></div>
        </div>
        <div class="vscroll">
            <svg width="8" height="7" viewBox="0 0 8 7"><path d="M4 .5 8 7H0z" fill="#666"/></svg>
            <i class="vthumb"></i>
            <svg class="vdown" width="8" height="7" viewBox="0 0 8 7"><path d="M4 6.5 8 0H0z" fill="#666"/></svg>
        </div>
    </main>

    <!-- sheet tabs -->
    <div class="sheet-tabs">
        <svg class="st-prev" width="6" height="10" viewBox="0 0 6 10"><path d="M5 .5 1 5l4 4.5" fill="none" stroke="#aaa"/></svg>
        <svg class="st-next" width="6" height="10" viewBox="0 0 6 10"><path d="M1 .5 5 5 1 9.5" fill="none" stroke="#aaa"/></svg>
        <div class="st-list">
            <span>ม.ค.2568</span>
            <span>ก.พ.2568</span>
            <span>มี.ค.2568</span>
            <span>เม.ย.2568</span>
            <span>พ.ค.2568</span>
            <span>มิ.ย.2568</span>
            <span class="st-on">ก.ค.2568</span>
        </div>
        <svg class="st-add" width="12" height="12" viewBox="0 0 12 12"><path d="M6 0v12M0 6h12" stroke="#555"/></svg>
        <span class="st-dots">⋮</span>
        <svg class="hs-left" width="6" height="9" viewBox="0 0 6 9"><path d="M0 4.5 6 0v9z" fill="#666"/></svg>
        <i class="hthumb"></i>
        <svg class="hs-right" width="6" height="9" viewBox="0 0 6 9"><path d="M6 4.5 0 0v9z" fill="#666"/></svg>
    </div>

    <!-- status bar -->
    <footer class="status">
        <span class="st-ready">พร้อม</span>
        <svg class="st-acc" width="13" height="13" viewBox="0 0 13 13"><circle cx="6" cy="2" r="1.5" fill="none" stroke="#555"/><path d="M1 4h10M6 4v4L3 12M6 8l3 4" fill="none" stroke="#555"/><path d="M8 8l4 4M12 8l-4 4" stroke="#888"/></svg>
        <span class="st-acctext">การช่วยสำหรับการเข้าถึง: โปรดศึกษาคำแนะนำ</span>
        <div class="st-right">
            <span class="view-on"><svg width="13" height="13" viewBox="0 0 13 13"><path d="M.5.5h12v12H.5zM4.5.5v12M8.5.5v12M.5 4.5h12M.5 8.5h12" fill="none" stroke="#555"/></svg></span>
            <svg class="view-2" width="11" height="13" viewBox="0 0 11 13"><path d="M.5.5h10v12H.5z" fill="none" stroke="#555"/><path d="M3 3h5v7H3zM3 5.5h5M3 8h5" fill="none" stroke="#777"/></svg>
            <svg class="view-3" width="13" height="13" viewBox="0 0 13 13"><path d="M.5.5h12v12h-3V6h-6v6.5h-3z" fill="none" stroke="#555"/></svg>
            <span class="zoom-minus">−</span>
            <span class="slider"><i></i></span>
            <span class="zoom-plus">+</span>
            <span class="zoom-val">100%</span>
        </div>
    </footer>
</body>
</html>
```

FILE: styles.css
```css
:root {
    --cols: 26px 113px 328px 91px 112px 91px 299px 293px 91px 91px 91px 81px;
    --ui: "Noto Sans", "Noto Sans Thai", "Liberation Sans", "DejaVu Sans", sans-serif;
    --cell: "Liberation Sans", "Noto Sans Thai", "Noto Sans", "DejaVu Sans", sans-serif;
    --green: #107c41;
}

* {
    box-sizing: border-box;
}

html, body {
    margin: 0;
    height: 936px;
    overflow: hidden;
}

body {
    background: #f3f3f3;
    color: #333;
    font-family: var(--ui);
    font-size: 11px;
    display: flex;
    flex-direction: column;
}

.defs {
    position: absolute;
}

.chev {
    width: 8px;
    height: 8px;
    flex: none;
}

/* title bar */
.titlebar {
    height: 44px;
    padding-left: 14px;
    display: flex;
    align-items: center;
    flex: none;
}

.logo-x {
    font: bold 8px "Liberation Sans", sans-serif;
    fill: #fff;
    text-anchor: middle;
}

.logo-gpt {
    font: bold 9px "Liberation Sans", sans-serif;
    fill: #e6e6e6;
    text-anchor: middle;
}

.undo { margin-left: 14px; }
.chev-undo { margin-left: 4px; }
.redo { margin-left: 6px; }
.chev-redo { margin-left: 4px; }
.qat-screen { margin-left: 8px; }
.qat-save { margin-left: 10px; }
.qat-saveas { margin-left: 10px; }
.qat-print { margin-left: 13px; }

.autosave-label {
    margin-left: 11px;
    width: 70px;
    font-size: 10px;
    white-space: nowrap;
}

.toggle {
    margin-left: 6px;
    width: 37px;
    height: 18px;
    border: 1px solid #666;
    border-radius: 9px;
    background: #fff;
    padding: 3px;
}

.toggle i {
    display: block;
    width: 11px;
    height: 11px;
    background: #555;
    border-radius: 50%;
}

.qat-more { margin-left: 14px; }

.filename {
    margin-left: 19px;
    width: 152px;
    white-space: nowrap;
    font-size: 10px;
}

.chev-file { margin-left: 3px; }

.search {
    margin-left: 171px;
    width: 330px;
    height: 27px;
    background: #fbfbfb;
    border-radius: 3px;
    box-shadow: 0 1px 2px rgba(0, 0, 0, .25);
    display: flex;
    align-items: center;
    padding-left: 10px;
    gap: 13px;
    color: #555;
}

.window-tools {
    margin-left: 488px;
    display: flex;
    align-items: center;
}

.avatar {
    width: 22px;
    height: 22px;
    border-radius: 50%;
    background: #d3d3d3;
    display: flex;
    align-items: center;
    justify-content: center;
}

.diamond { margin-left: 23px; }
.win-min { margin-left: 30px; }
.win-max { margin-left: 33px; }
.win-close { margin-left: 33px; }

/* menu tabs */
.tabs {
    height: 26px;
    flex: none;
    display: flex;
    align-items: center;
    padding: 0 0 2px 19px;
    font-size: 11.5px;
    white-space: nowrap;
    position: relative;
}

.tabs > span { flex: none; }
.tab-file { width: 41px; }
.tab-home { width: 62px; font-weight: 700; color: #222; position: relative; }
.tab-home::after {
    content: "";
    position: absolute;
    left: 0;
    width: 43px;
    bottom: -2px;
    height: 2px;
    background: var(--green);
}
.tab-insert { width: 52px; }
.tab-layout { width: 114px; }
.tab-formula { width: 38px; }
.tab-data { width: 47px; }
.tab-review { width: 38px; }
.tab-view { width: 54px; }
.tab-auto { width: 57px; }

.tabs-right {
    margin-left: auto;
    margin-right: 11px;
    display: flex;
    gap: 8px;
}

.btn-comment, .btn-share {
    height: 21px;
    font: inherit;
    font-size: 11px;
    border-radius: 3px;
    display: flex;
    align-items: center;
    gap: 3px;
    padding: 0;
    justify-content: center;
}

.btn-comment {
    width: 67px;
    background: #fff;
    border: 1px solid #b5b5b5;
    color: #333;
}

.btn-share {
    width: 52px;
    background: var(--green);
    border: 0;
    color: #fff;
}

.btn-share .chev { filter: invert(1); }

/* ribbon */
.ribbon {
    margin: 0 10px 0 7px;
    height: 90px;
    flex: none;
    padding: 4px 0 5px;
    background: #fff;
    border-radius: 8px;
    box-shadow: 0 1px 4px rgba(0, 0, 0, .22);
    display: flex;
    position: relative;
}

.group {
    flex: none;
    border-right: 1px solid #dcdcdc;
    display: flex;
    flex-direction: column;
}

.group-body {
    height: 70px;
    flex: none;
    display: flex;
}

.group-label {
    height: 11px;
    line-height: 14px;
    text-align: center;
    font-size: 10px;
    color: #444;
    white-space: nowrap;
    position: relative;
}

.launcher {
    position: absolute;
    right: 3px;
    top: 3px;
    width: 9px;
    height: 9px;
}

.g-clip { width: 153px; }
.g-font { width: 212px; }
.g-align { width: 275px; }
.g-num { width: 146px; }
.g-style { width: 170px; }
.g-cells { width: 132px; }
.g-edit { width: 222px; }
.g-addins { width: 56px; }
.g-gpt { width: 73px; }
.g-ai { width: 60px; }
.g-auto { width: 63px; }

.paste {
    margin-left: 14px;
    width: 30px;
    padding-top: 3px;
    display: flex;
    flex-direction: column;
    align-items: center;
    color: #a8a8a8;
    font-size: 10px;
    line-height: 13px;
}

.paste .chev { margin-top: 1px; opacity: .6; }

.stack {
    margin-left: 11px;
    display: flex;
    flex-direction: column;
}

.item {
    height: 23px;
    display: flex;
    align-items: center;
    gap: 4px;
    white-space: nowrap;
    font-size: 10px;
}

.chev-copy { margin-left: 14px; }

.rows {
    flex-direction: column;
    gap: 8px;
    padding: 7px 0 0 7px;
}

.row-ctl {
    height: 21px;
    display: flex;
    align-items: center;
}

.select {
    height: 21px;
    border: 1px solid #9a9a9a;
    border-radius: 3px;
    background: #fff;
    display: flex;
    align-items: center;
    justify-content: space-between;
    padding: 0 2px 0 3px;
    font-size: 12px;
    white-space: nowrap;
}

.sel-font { width: 110px; }
.sel-size { width: 38px; margin-left: 3px; }
.sel-num { width: 131px; font-size: 11px; }

.grow-a, .shrink-a {
    font-size: 15px;
    line-height: 1;
    flex: none;
}

.grow-a { margin-left: 6px; width: 22px; }
.shrink-a { margin-left: 3px; width: 20px; font-size: 13px; }

sup {
    font-size: 9px;
    line-height: 0;
    color: #2b88d8;
}

.toggle-btn {
    background: #f0f0f0;
    border: 1px solid #8f8f8f;
    border-radius: 3px;
    display: flex;
    align-items: center;
    justify-content: center;
    flex: none;
    height: 22px;
}

.b-bold { width: 22px; font: bold 12px "Liberation Sans", sans-serif; }
.b-italic { margin-left: 10px; font: italic 13px "Liberation Serif", serif; }
.b-under { margin-left: 17px; text-decoration: underline; font: 13px "Liberation Sans", sans-serif; }
.b-under + .chev { margin-left: 6px; }
.vsep { width: 1px; height: 20px; background: #dcdcdc; flex: none; }
.sep-u { margin: 0 6px; }
.b-border + .chev { margin-left: 5px; }
.sep-b { margin: 0 6px; }
.b-fill + .chev { margin-left: 5px; }
.b-color {
    margin-left: 11px;
    width: 16px;
    font: 14px "Liberation Sans", sans-serif;
    text-align: center;
    line-height: 14px;
}
.b-color i {
    display: block;
    height: 3px;
    background: #f00;
}
.b-color + .chev { margin-left: 4px; }

.al { flex: none; }
.g-align .rows { padding-left: 11px; }
.al-on { width: 23px; margin: 0 5px; }
.sep-al { margin: 0 6px; }
.al-orient { flex: none; }
.al-orient + .chev { margin-left: 3px; }
.sep-wrap { margin-left: 21px; margin-right: 6px; }
.wrap-btn {
    width: 75px;
    gap: 3px;
    font-size: 10px;
    white-space: nowrap;
}
.al-indent { flex: none; }
.al-indent2 { flex: none; margin-left: 7px; }
.sep-wrap2 { margin-left: 12px; margin-right: 9px; }
.merge-text { margin-left: 4px; width: 84px; white-space: nowrap; font-size: 10px; }
.chev-merge { margin-left: 10px; }

.n-acc { margin-left: 4px; }
.n-acc + .chev { margin-left: 3px; }
.n-pct { margin-left: 10px; font: 17px "Liberation Sans", sans-serif; }
.n-comma { margin-left: 10px; font: bold 19px/14px "Liberation Sans", sans-serif; }
.sep-n { margin-left: 8px; }
.n-dec {
    margin-left: 4px;
    display: flex;
    flex-direction: column;
    font: 9px/10px "Liberation Sans", sans-serif;
    color: #555;
    width: 19px;
    text-align: right;
}
.n-dec b { font-weight: 400; }
.n-dec em { font-style: normal; color: #2b88d8; }

.big-row {
    justify-content: space-around;
}

.big {
    display: flex;
    flex-direction: column;
    align-items: center;
    line-height: 14px;
    font-size: 10.5px;
    white-space: nowrap;
    padding-top: 4px;
    flex: none;
}

.big > svg:first-child {
    height: 27px;
    margin-bottom: 1px;
}

.big > svg.chev { margin-top: 3px; }

.g-style .big-row { justify-content: flex-start; }
.b-cond { margin-left: 6px; width: 62px; }
.b-table { margin-left: 1px; width: 60px; }
.b-cell { width: 38px; }
.g-cells .big-row { justify-content: flex-start; }
.b-ins { margin-left: 6px; width: 40px; }
.b-del { width: 40px; }
.b-fmt { width: 40px; }

.stack-edit { margin-left: 11px; width: 115px; }
.chev-sum { margin-left: 11px; }
.b-sort { width: 50px; }
.b-find { width: 47px; }

.big.b-plain { width: 100%; font-size: 11px; padding-top: 2px; }
.b-plain > svg:first-child { height: 29px; margin-bottom: 0; }

.ribbon-collapse {
    position: absolute;
    right: 5px;
    top: 75px;
}

/* formula bar */
.formula-bar {
    margin: 7px 8px 0 8px;
    height: 20px;
    flex: none;
    display: flex;
    align-items: stretch;
}

.name-box, .fx-btns, .fx-input {
    background: #fff;
    border-radius: 3px;
    box-shadow: 0 0 2px rgba(0, 0, 0, .25);
    display: flex;
    align-items: center;
}

.name-box {
    width: 90px;
    padding: 0 4px 0 5px;
    justify-content: space-between;
    font-size: 11px;
}

.fx-dots {
    width: 20px;
    text-align: center;
    line-height: 20px;
    font-size: 13px;
    color: #555;
}

.fx-btns {
    width: 76px;
    gap: 8px;
    padding-left: 4px;
}

.fx {
    font: italic 15px "Liberation Serif", serif;
    color: #333;
}

.fx-btns .chev { margin-left: -5px; }

.fx-input {
    margin-left: 5px;
    flex: 1;
    padding: 0 4px 0 11px;
    justify-content: space-between;
    font-family: var(--cell);
    font-size: 12px;
}

/* sheet */
.sheet-wrap {
    margin-top: 8px;
    height: 692px;
    flex: none;
    display: flex;
    overflow: hidden;
}

.sheet {
    width: 1707px;
    flex: none;
    font-family: var(--cell);
    font-size: 12px;
    color: #111;
}

.row {
    display: grid;
    grid-template-columns: var(--cols);
    height: 23.4px;
}

.row > div {
    padding: 7.5px 3px 0;
    line-height: 16px;
    white-space: pre;
    overflow: hidden;
    background: #d9d9d9;
    border-bottom: 1px solid #111;
    box-shadow: inset 0 1px 0 rgba(0, 0, 0, .22);
}

.row > div:nth-child(odd) { background: #c4bd97; }

/* digit-only columns run tighter */
.row > div:nth-child(2),
.row > div:nth-child(4),
.row > div:nth-child(5),
.row > div:nth-child(6),
.row > div:nth-child(12) { letter-spacing: -.4px; }

.row > div:nth-child(2),
.row > div:nth-child(4),
.row > div:nth-child(6),
.row > div:nth-child(12) { text-align: center; }
.row > div:nth-child(5) { text-align: right; }

/* dark edge on the columns that have one */
.row > div:nth-child(2),
.row > div:nth-child(3),
.row > div:nth-child(5),
.row > div:nth-child(6),
.row > div:nth-child(7),
.row > div:nth-child(8),
.row > div:nth-child(9),
.row > div:nth-child(10),
.row > div:nth-child(11) { border-right: 1px solid #555; }

.row > .rh {
    background: #f3f3f3;
    border: 0;
    box-shadow: none;
    padding: 4px 0 0;
    font: 15px/20px "Liberation Sans", sans-serif;
    letter-spacing: -.5px;
    color: #555;
    text-align: center;
}

.col-heads { height: 16px; }

.row.col-heads > div {
    background: #f3f3f3;
    border: 0;
    border-right: 1px solid #e0e0e0;
    border-bottom: 1px solid #aaa;
    box-shadow: none;
    padding: 0;
    font-size: 13px;
    line-height: 15px;
    color: #555;
    text-align: center;
    overflow: visible;
}

.row.col-heads > .col-on {
    background: #d2d2d2;
    color: var(--green);
}

.corner {
    position: relative;
}

.corner::after {
    content: "";
    position: absolute;
    right: 2px;
    bottom: 2px;
    border: 5px solid transparent;
    border-right-color: #cfcfcf;
    border-bottom-color: #cfcfcf;
}

.head-row { height: 30px; }

.row.head-row > div {
    background: #00b0f0;
    font-weight: 700;
    font-size: 12px;
    letter-spacing: 0;
    line-height: 15px;
    padding: 0;
    text-align: center;
    display: flex;
    align-items: center;
    justify-content: center;
    border-right: 1px solid #111;
    box-shadow: none;
    overflow: hidden;
}

.row.head-row > div:nth-child(4),
.row.head-row > div:nth-child(5),
.row.head-row > div:nth-child(6),
.row.head-row > div:last-child {
    display: block;
}

.row.head-row > .rh {
    background: #e1e1e1;
    color: var(--green);
    border: 0;
    font-weight: 400;
    font-size: 15px;
    line-height: 20px;
    padding-top: 12px;
    display: block;
}

.row.head-row > .selected {
    outline: 2px solid var(--green);
    outline-offset: -1px;
    border: 1px solid #fff;
    overflow: visible;
    position: relative;
    z-index: 1;
}

.handle {
    position: absolute;
    right: -4px;
    bottom: -4px;
    width: 6px;
    height: 6px;
    background: var(--green);
    border: 1px solid #fff;
}

/* scrollbars */
.vscroll {
    flex: 1;
    position: relative;
    display: flex;
    flex-direction: column;
    align-items: center;
    padding-top: 3px;
}

.vthumb {
    margin-top: 5px;
    width: 9px;
    height: 15px;
    border-radius: 5px;
    background: #7d7d7d;
}

.vdown {
    margin-top: auto;
    margin-bottom: 3px;
}

/* sheet tabs */
.sheet-tabs {
    height: 29px;
    flex: none;
    display: flex;
    align-items: center;
    padding-left: 24px;
    border-bottom: 1px solid #e8e8e8;
    position: relative;
}

.st-next { margin-left: 25px; }

.st-list {
    margin-left: 38px;
    display: flex;
    height: 25px;
    align-self: flex-start;
    font-size: 13px;
    white-space: nowrap;
}

.st-list span {
    width: 75.5px;
    text-align: center;
    line-height: 20px;
    border-right: 1px solid #ddd;
    height: 20px;
    margin-top: 3px;
    color: #333;
}

.st-list span:nth-child(6) { border-right: 0; }

.st-list .st-on {
    width: 66px;
    height: 25px;
    margin: 0 0 0 3px;
    line-height: 21px;
    background: #fff;
    border: 0;
    border-radius: 0 0 3px 3px;
    font-size: 12.5px;
    font-weight: 700;
    position: relative;
    box-shadow: 0 1px 2px rgba(0, 0, 0, .15);
}

.st-on::after {
    content: "";
    position: absolute;
    left: 8px;
    right: 8px;
    bottom: 3px;
    height: 2px;
    background: var(--green);
}

.st-add { margin-left: 41px; }
.st-dots { margin-left: 360px; font-size: 13px; color: #555; width: 6px; }
.hs-left { margin-left: 19px; }
.hthumb {
    margin-left: 5px;
    width: 600px;
    height: 8px;
    border-radius: 4px;
    background: #7a7a7a;
}
.hs-right { margin-left: 32px; }

/* status bar */
.status {
    flex: 1;
    display: flex;
    align-items: center;
    padding-left: 10px;
    font-size: 9.5px;
}

.st-acc { margin-left: 15px; }
.st-acctext { margin-left: 2px; font-size: 11px; letter-spacing: .15px; white-space: nowrap; }

.st-right {
    margin-left: auto;
    height: 100%;
    display: flex;
    align-items: center;
    padding-right: 8px;
}

.view-on {
    width: 36px;
    height: 100%;
    background: #e2e2e2;
    display: flex;
    align-items: center;
    justify-content: center;
}

.view-2 { margin-left: 12px; }
.view-3 { margin-left: 24px; }
.zoom-minus { margin-left: 17px; font-size: 13px; }

.slider {
    margin-left: 4px;
    width: 88px;
    height: 1px;
    background: #777;
    position: relative;
}

.slider i {
    position: absolute;
    left: 44px;
    top: -6px;
    width: 3px;
    height: 13px;
    background: #555;
}

.zoom-plus { margin-left: 4px; font-size: 13px; }
.zoom-val { margin-left: 14px; font-size: 10px; }
```
